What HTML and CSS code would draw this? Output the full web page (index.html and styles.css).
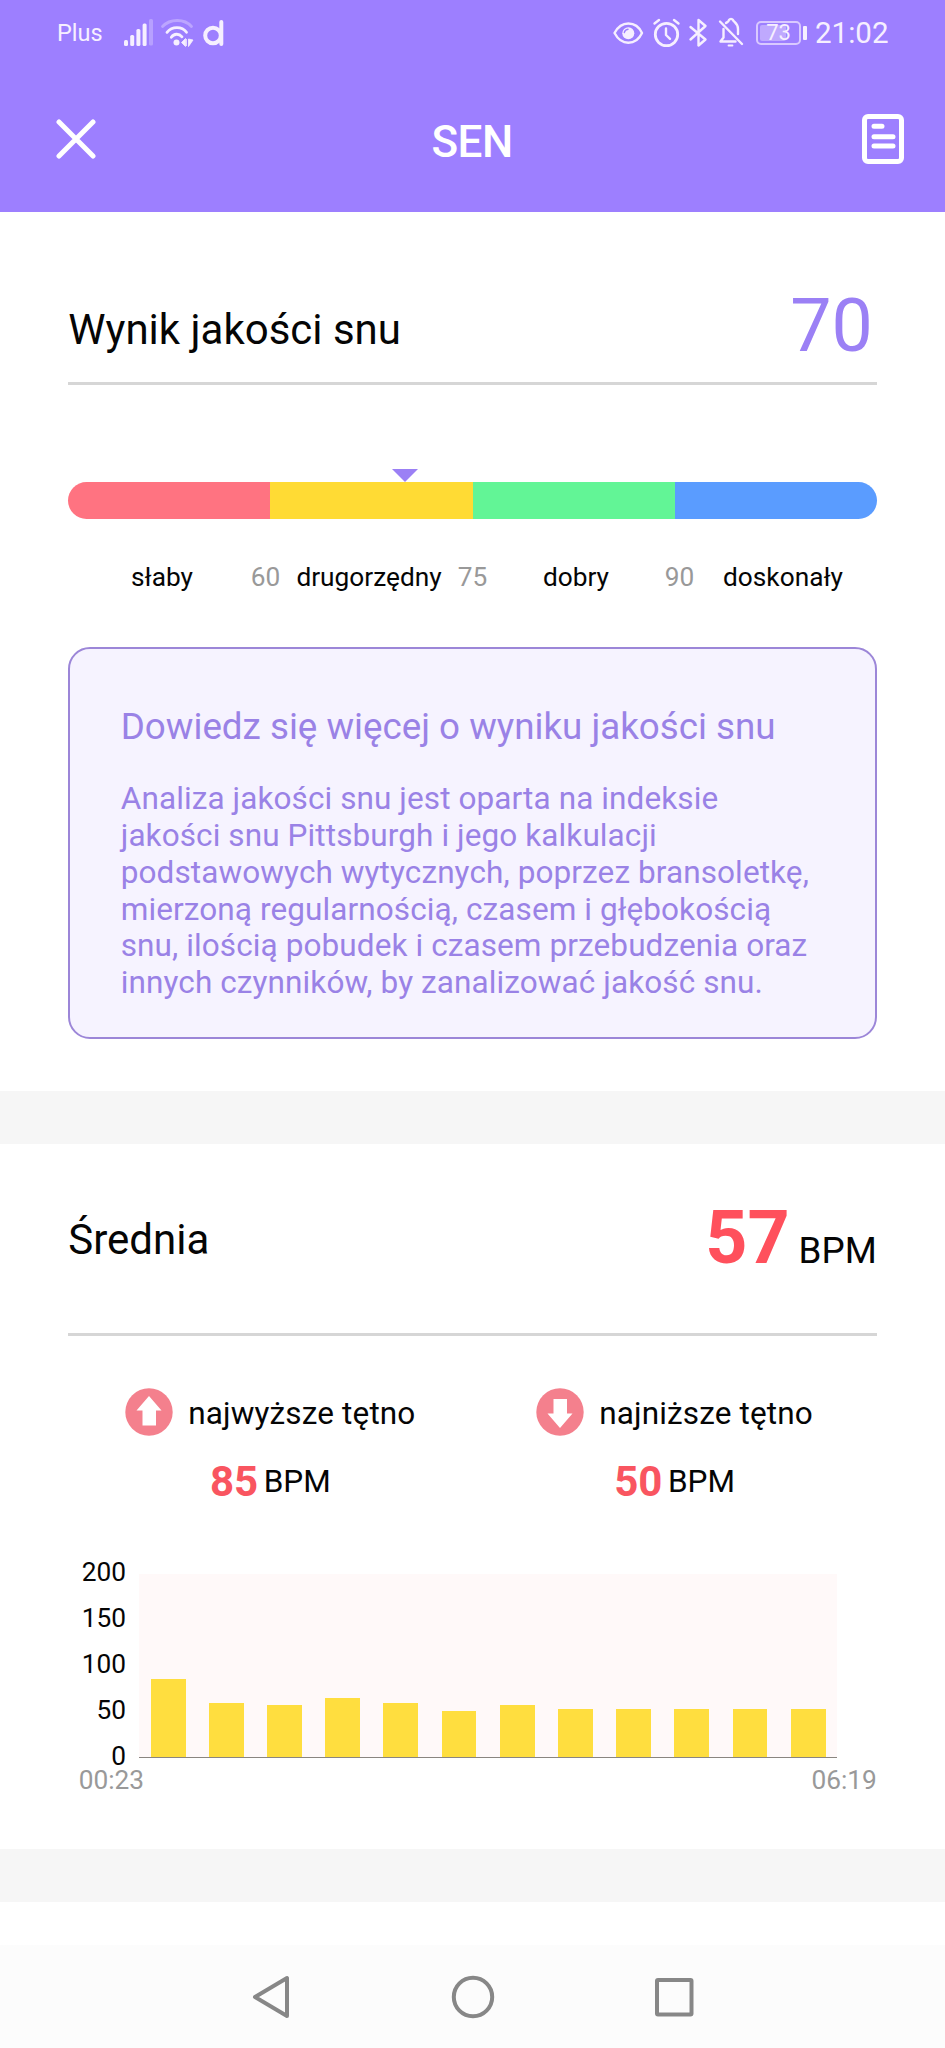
FILE: index.html
```html
<!DOCTYPE html>
<html lang="pl">
<head>
  <meta charset="UTF-8">
  <meta name="viewport" content="width=device-width, initial-scale=1.0">
  <title>Sen</title>
  <link rel="stylesheet" href="styles.css">
</head>
<body>

  <header class="header">
    <div class="status-bar">
      <span class="carrier">Plus</span>
      <svg class="status-left" width="104" height="32" viewBox="0 0 104 32">
        <!-- signal -->
        <g fill="#f6efff">
          <rect x="0" y="22" width="4" height="6" rx="1.5"/>
          <rect x="6.2" y="17" width="4" height="11" rx="1.5"/>
          <rect x="12.4" y="11" width="4" height="17" rx="1.5"/>
          <rect x="18.6" y="5.500" width="4" height="22.500" rx="1.5"/>
          <rect x="25" y="1" width="4" height="26.500" rx="1.5" opacity="0.3"/>
        </g>
        <!-- wifi -->
        <g fill="none" stroke="#f6efff" stroke-width="2.8" stroke-linecap="round">
          <path d="M38.500 8.500C46 .5 60.500 .5 67.500 8.500" opacity="0.35"/>
          <path d="M43 14.300C48 8 58 8 62.500 14.300"/>
          <path d="M47.300 19.300C50 15.300 55 15.300 58 18.800"/>
        </g>
        <circle cx="52.500" cy="24.500" r="3" fill="#f6efff"/>
        <path d="M57.500 24.500l4-4v8zM69 22l-4.500 6.500V21zM62.500 21v7" fill="#f6efff" stroke="#f6efff" stroke-width=".8"/>
        <circle cx="89" cy="17.500" r="7.800" fill="none" stroke="#f6efff" stroke-width="4"/>
        <path d="M97.300 4v22" fill="none" stroke="#f6efff" stroke-width="4" stroke-linecap="round"/>
      </svg>
      <div class="status-right">
        <svg width="132" height="32" viewBox="0 0 132 32" fill="none" stroke="#f6efff" stroke-width="2.400" stroke-linecap="round" stroke-linejoin="round">
          <!-- eye -->
          <path d="M1.500 16C5 9.500 10 6.500 15.300 6.500S26 9.500 29 16c-3 6.500-8.500 9.800-13.700 9.800S5 22.500 1.500 16z"/>
          <circle cx="15.300" cy="16.200" r="6" fill="#f6efff" stroke="none"/>
          <path d="M11.300 15.500q.7-2.800 3.700-3.200" stroke="#9d7fff" stroke-width="1.400"/>
          <!-- alarm -->
          <circle cx="53.500" cy="17.500" r="11.200" stroke-width="2.800"/>
          <path d="M53 11.500v6.500l4 3.800M41.500 6.500l4.500-3.500M65.500 6.500L61 3"/>
          <!-- bluetooth -->
          <path d="M77.500 10l15 12.500-7 6V3l7 6-15 13.500"/>
          <!-- bell off -->
          <path d="M107 4.500L129 27"/>
          <path d="M110.500 12v8.500l-3 4h15M113 6c1.500-1 2.500-1 3-3 1-1.500 3-1.500 4 0 .5 2 5 3 5 9v5"/>
          <path d="M115.500 28.500h4" stroke-width="1.800"/>
        </svg>
        <div class="battery"><span class="battery-level"></span><span class="battery-text">73</span></div>
        <span class="battery-tip"></span>
        <span class="clock">21:02</span>
      </div>
    </div>
    <div class="toolbar">
      <svg width="40" height="40" viewBox="0 0 40 40" fill="none" stroke="#fff" stroke-width="5" stroke-linecap="round">
        <path d="M3 3l34 34M37 3L3 37"/>
      </svg>
      <h1>SEN</h1>
      <svg width="42" height="50" viewBox="0 0 42 50" fill="none" stroke="#fff" stroke-width="5" stroke-linecap="round">
        <rect x="2.500" y="2.500" width="37" height="45" rx="3.500"/>
        <path d="M12 12.200h8M12 22.700h19M12 32h19"/>
      </svg>
    </div>
  </header>

  <section class="card quality">
    <div class="card-head">
      <h2>Wynik jakości snu</h2>
      <span class="score">70</span>
    </div>
    <div class="scale">
      <span class="marker"></span>
      <div class="seg poor"></div>
      <div class="seg fair"></div>
      <div class="seg good"></div>
      <div class="seg great"></div>
    </div>
    <div class="scale-labels">
      <span class="name">słaby</span>
      <span>60</span>
      <span class="name">drugorzędny</span>
      <span>75</span>
      <span class="name">dobry</span>
      <span>90</span>
      <span class="name">doskonały</span>
    </div>
    <div class="info">
      <h3>Dowiedz się więcej o wyniku jakości snu</h3>
      <p>Analiza jakości snu jest oparta na indeksie jakości snu Pittsburgh i jego kalkulacji podstawowych wytycznych, poprzez bransoletkę, mierzoną regularnością, czasem i głębokością snu, ilością pobudek i czasem przebudzenia oraz innych czynników, by zanalizować jakość snu.</p>
    </div>
  </section>

  <section class="card heart">
    <div class="card-head">
      <h2>Średnia</h2>
      <div class="average"><b>57</b><span>BPM</span></div>
    </div>
    <div class="stats">
      <div class="stat">
        <div class="stat-label">
          <svg width="48" height="48" viewBox="0 0 48 48">
            <circle cx="24" cy="24" r="23.700" fill="#f4808d"/>
            <path d="M24 8L36.500 22.500H31V37.500H17.500V22.500H11.500z" fill="#fff"/>
          </svg>
          <span>najwyższe tętno</span>
        </div>
        <div class="stat-value"><b>85</b><span>BPM</span></div>
      </div>
      <div class="stat">
        <div class="stat-label">
          <svg width="48" height="48" viewBox="0 0 48 48">
            <circle cx="24" cy="24" r="23.700" fill="#f4808d"/>
            <path d="M24 40L36.500 25.500H31V11H17.500V25.500H11.500z" fill="#fff"/>
          </svg>
          <span>najniższe tętno</span>
        </div>
        <div class="stat-value"><b>50</b><span>BPM</span></div>
      </div>
    </div>
    <div class="chart">
      <div class="y-axis">
        <span>200</span>
        <span>150</span>
        <span>100</span>
        <span>50</span>
        <span>0</span>
      </div>
      <div class="plot">
        <div class="bar" style="height: 42.5%"></div>
        <div class="bar" style="height: 29.5%"></div>
        <div class="bar" style="height: 28.5%"></div>
        <div class="bar" style="height: 32.5%"></div>
        <div class="bar" style="height: 29.5%"></div>
        <div class="bar" style="height: 25%"></div>
        <div class="bar" style="height: 28.5%"></div>
        <div class="bar" style="height: 26.5%"></div>
        <div class="bar" style="height: 26%"></div>
        <div class="bar" style="height: 26.5%"></div>
        <div class="bar" style="height: 26%"></div>
        <div class="bar" style="height: 26%"></div>
      </div>
    </div>
    <div class="x-axis">
      <span>00:23</span>
      <span>06:19</span>
    </div>
  </section>

  <nav class="nav-bar">
    <svg width="42" height="44" viewBox="0 0 42 44"><path d="M4 22L36 3v38z"/></svg>
    <svg width="44" height="44" viewBox="0 0 44 44"><circle cx="22" cy="22" r="19.200"/></svg>
    <svg width="42" height="44" viewBox="0 0 42 44"><rect x="4" y="5" width="34.500" height="34.500" rx="1"/></svg>
  </nav>

</body>
</html>
```

FILE: styles.css
```css
* {
  box-sizing: border-box;
}

body {
  margin: 0;
  height: 2048px;
  display: flex;
  flex-direction: column;
  overflow: hidden;
  background-color: #fff;
  color: #050505;
  font-family: Roboto, "Liberation Sans", sans-serif;
}

h1, h2, h3, p {
  margin: 0;
  font-weight: 400;
}

svg {
  display: block;
  flex: none;
}

/* header */
.header {
  height: 212px;
  flex: none;
  background-color: #9d7fff;
  color: #fff;
}

.status-bar {
  display: flex;
  align-items: center;
  height: 66px;
  padding: 0 56.5px 0 57px;
  color: #f6efff;
}

.carrier {
  width: 67px;
  font-size: 23.5px;
}

.status-left {
  margin-top: 2px;
}

.status-right {
  display: flex;
  align-items: center;
  margin-left: auto;
}

.battery {
  position: relative;
  width: 45px;
  height: 24px;
  margin-left: 11px;
  border: 2px solid #d9c9ff;
  border-radius: 5px;
  text-align: center;
}

.battery-level {
  position: absolute;
  left: 2px;
  top: 2px;
  width: 26px;
  height: 16px;
  border-radius: 2px;
  background-color: #bfa9fe;
}

.battery-text {
  position: relative;
  display: block;
  font-size: 22px;
  line-height: 20px;
}

.battery-tip {
  width: 4px;
  height: 14px;
  margin-left: 2px;
  border-radius: 1px;
  background-color: #f6efff;
}

.clock {
  margin-left: 8px;
  font-size: 29.5px;
}

.toolbar {
  display: flex;
  align-items: center;
  height: 146px;
  padding: 0 41px 0 56px;
}

.toolbar h1 {
  flex: 1;
  margin-top: 5px;
  padding-right: 14px;
  font-size: 44px;
  font-weight: 500;
  letter-spacing: -0.5px;
  text-align: center;
}

/* cards */
.card {
  flex: none;
  padding: 0 68.25px;
  border-bottom: 53px solid #f6f6f6;
}

.card-head {
  display: flex;
  align-items: flex-end;
  justify-content: space-between;
  border-bottom: 3px solid #d6d6d6;
}

.card-head h2 {
  font-size: 42px;
  line-height: 50px;
}

.quality {
  height: 932px;
}

.quality .card-head {
  height: 173px;
}

.quality h2 {
  margin-bottom: 27px;
}

.score {
  margin: 0 4px 13px 0;
  color: #9b80f5;
  font-size: 73.5px;
  line-height: 86px;
}

.scale {
  position: relative;
  display: flex;
  height: 37px;
  margin-top: 97px;
}

.seg {
  flex: 1;
}

.poor {
  border-radius: 19px 0 0 19px;
  background-color: #ff7381;
}

.fair {
  background-color: #ffdb34;
}

.good {
  background-color: #62f596;
}

.great {
  border-radius: 0 19px 19px 0;
  background-color: #5a9cff;
}

.marker {
  position: absolute;
  left: 324px;
  top: -13px;
  border: 13px solid transparent;
  border-top-color: #9b80f5;
  border-bottom: 0;
}

.scale-labels {
  display: flex;
  margin-top: 43px;
  padding: 0 5px;
  font-size: 26.25px;
  line-height: 31px;
  color: #999;
}

.scale-labels .name {
  flex: 1 1 0;
  min-width: 0;
  text-align: center;
  color: #050505;
}

.info {
  height: 392px;
  margin-top: 54px;
  padding: 56px 54px 0 50.5px;
  border: 2px solid #9c86d8;
  border-radius: 22px;
  background-color: #f6f3ff;
  color: #9a82e6;
}

.info h3 {
  font-size: 36.75px;
  line-height: 43px;
}

.info p {
  margin-top: 33px;
  font-size: 31.5px;
  line-height: 36.85px;
  letter-spacing: 0.1px;
}

.heart {
  height: 758px;
}

.heart .card-head {
  height: 192px;
}

.heart h2 {
  margin-bottom: 68px;
}

.average {
  display: flex;
  align-items: baseline;
  gap: 9px;
  margin-bottom: 39px;
  font-size: 36.75px;
  line-height: 86px;
}

.average b {
  color: #ff505c;
  font-size: 73.5px;
}

.stats {
  display: flex;
  margin-top: 52px;
}

.stat {
  flex: 1;
  font-size: 31.5px;
}

.stat-label,
.stat-value {
  display: flex;
  align-items: center;
  justify-content: center;
}

.stat-label {
  gap: 15px;
  height: 48px;
  letter-spacing: 0.14px;
}

.stat-label span {
  padding-top: 2px;
}

.stat-value {
  gap: 5.5px;
  height: 50px;
  margin-top: 20px;
}

.stat-value b {
  color: #f95560;
  font-size: 42px;
}

/* heart rate chart */
.chart {
  display: flex;
  margin-top: 51px;
  padding-right: 39.5px;
}

.y-axis {
  display: flex;
  flex-direction: column;
  justify-content: space-between;
  width: 57.75px;
  height: 215px;
  margin-right: 13px;
  font-size: 26.25px;
  line-height: 31px;
  text-align: right;
}

.plot {
  flex: 1;
  display: flex;
  align-items: flex-end;
  justify-content: space-around;
  height: 184px;
  margin-top: 17px;
  border-bottom: 1px solid #8a8580;
  background-color: #fff9f9;
}

.bar {
  width: 5%;
  background-color: #ffde3f;
}

.x-axis {
  display: flex;
  justify-content: space-between;
  margin-top: -7.5px;
  padding-left: 10.5px;
  font-size: 26.25px;
  line-height: 31px;
  color: #999;
}

/* system navigation */
.nav-bar {
  display: flex;
  align-items: center;
  justify-content: center;
  gap: 158px;
  height: 103px;
  margin-top: auto;
  background-color: #fcfcfc;
}

.nav-bar svg {
  fill: none;
  stroke: #878787;
  stroke-width: 4;
  stroke-linejoin: round;
}
```
